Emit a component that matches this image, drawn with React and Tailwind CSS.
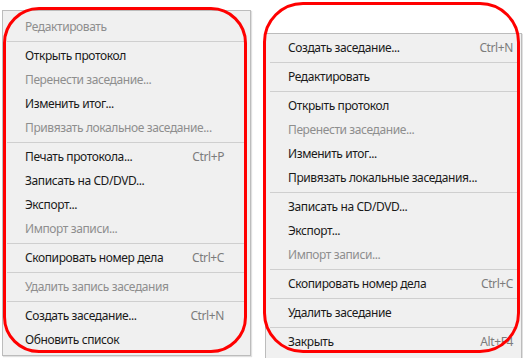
import React from 'react'

const leftItems = [
  { label: 'Редактировать', disabled: true },
  { sep: true },
  { label: 'Открыть протокол' },
  { label: 'Перенести заседание...', disabled: true },
  { label: 'Изменить итог...' },
  { label: 'Привязать локальное заседание...', disabled: true },
  { sep: true },
  { label: 'Печать протокола...', shortcut: 'Ctrl+P' },
  { label: 'Записать на CD/DVD...' },
  { label: 'Экспорт...' },
  { label: 'Импорт записи...', disabled: true },
  { sep: true },
  { label: 'Скопировать номер дела', shortcut: 'Ctrl+C' },
  { sep: true },
  { label: 'Удалить запись заседания', disabled: true },
  { sep: true },
  { label: 'Создать заседание...', shortcut: 'Ctrl+N' },
  { label: 'Обновить список' },
]

const rightItems = [
  { label: 'Создать заседание...', shortcut: 'Ctrl+N' },
  { sep: true },
  { label: 'Редактировать' },
  { sep: true },
  { label: 'Открыть протокол' },
  { label: 'Перенести заседание...', disabled: true },
  { label: 'Изменить итог...' },
  { label: 'Привязать локальные заседания...' },
  { sep: true },
  { label: 'Записать на CD/DVD...' },
  { label: 'Экспорт...' },
  { label: 'Импорт записи...', disabled: true },
  { sep: true },
  { label: 'Скопировать номер дела', shortcut: 'Ctrl+C' },
  { sep: true },
  { label: 'Удалить заседание' },
  { sep: true },
  { label: 'Закрыть', shortcut: 'Alt+F4' },
]

const Menu = ({ items, className, padRight }) => (
  <div
    className={`${className} flex flex-col bg-[#f0f0f0] border border-[#bcbcbc] shadow-[1px_1px_1px_rgba(0,0,0,0.12)]`}
  >
    {items.map((item, index) =>
      item.sep ? (
        <div key={index} className="h-[5px] flex items-center mx-[4px]">
          <div className="h-px w-full bg-[#cfcfcf]" />
        </div>
      ) : (
        <div
          key={index}
          className={`h-[24px] flex items-center pl-[22px] ${padRight} ${
            item.disabled ? 'text-[#8e8e8e]' : 'text-[#1a1a1a]'
          }`}
        >
          <span className="flex-1 whitespace-nowrap">{item.label}</span>
          {item.shortcut && (
            <span className="text-[#7c7c7c] whitespace-nowrap">{item.shortcut}</span>
          )}
        </div>
      )
    )}
  </div>
)

export default function App() {
  return (
    <div
      className="relative w-[523px] h-[358px] overflow-hidden bg-white text-[12px] leading-none tracking-[-0.4px]"
      style={{ fontFamily: '"Noto Sans", "Open Sans", sans-serif' }}
    >
      <div className="flex items-start">
        <Menu
          items={leftItems}
          className="ml-[2px] mt-[10px] w-[249px] pt-[4px] pb-[3px]"
          padRight="pr-[26px]"
        />
        <Menu
          items={rightItems}
          className="ml-[14px] mt-[33px] w-[257px] pt-[2px] pb-[4px]"
          padRight="pr-[8px]"
        />
      </div>
      <div className="absolute left-[3px] top-[7px] w-[244px] h-[346px] rounded-[36px] border-[3px] border-[#ff0000] pointer-events-none" />
      <div className="absolute left-[263px] top-[2px] w-[257px] h-[351px] rounded-[40px] border-[3px] border-[#ff0000] pointer-events-none" />
    </div>
  )
}
